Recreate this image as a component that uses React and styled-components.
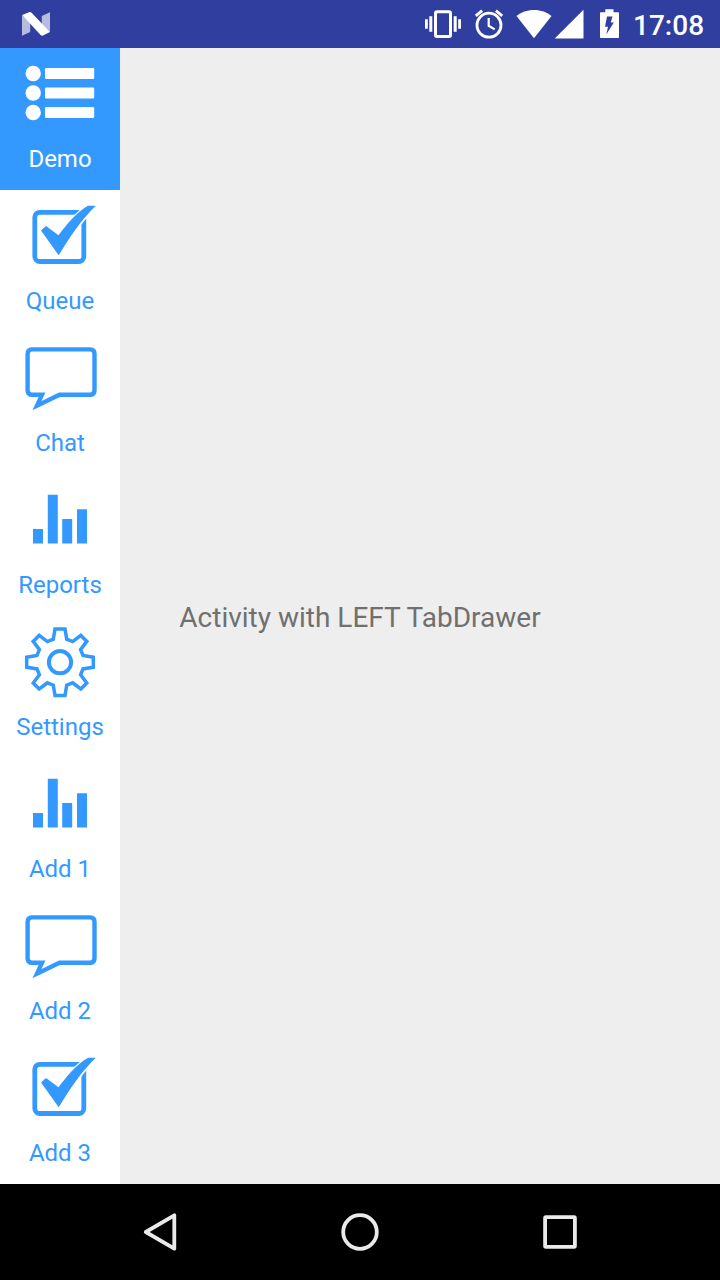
import React from 'react';
import styled, { createGlobalStyle } from 'styled-components';

const GlobalStyle = createGlobalStyle`
  body {
    margin: 0;
    background: #eeeeee;
    font-family: Roboto, "Liberation Sans", sans-serif;
  }
  svg { display: block; }
`;

const Screen = styled.div`
  display: grid;
  grid-template-rows: 48px 1fr 96px;
  width: 720px;
  height: 1280px;
  overflow: hidden;
`;

const StatusBar = styled.header`
  display: flex;
  align-items: center;
  justify-content: space-between;
  padding-right: 16px;
  background: #303f9f;
  color: #fff;
`;

const StatusIcons = styled.div`
  display: flex;
  align-items: center;
`;

const Clock = styled.time`
  width: 71px;
  padding-top: 4px;
  font-size: 28px;
  font-weight: 500;
  line-height: 34px;
  white-space: nowrap;
`;

const Stage = styled.main`
  display: grid;
  grid-template-columns: 120px 1fr;
  background: #eeeeee;
`;

const Message = styled.p`
  grid-area: 1 / 1 / 2 / 3;
  place-self: center;
  margin: 0;
  padding-top: 2px;
  font-size: 28px;
  line-height: 33px;
  color: #707070;
`;

const Drawer = styled.nav`
  grid-area: 1 / 1 / 2 / 2;
  display: flex;
  flex-direction: column;
  background: #fff;
`;

const Tab = styled.a`
  display: flex;
  flex-direction: column;
  align-items: center;
  height: 142px;
  color: ${(p) => (p.$active ? '#fff' : '#3399ff')};
  background: ${(p) => (p.$active ? '#3399ff' : '#fff')};
`;

const TabLabel = styled.span`
  margin-top: 4px;
  font-size: 24px;
  line-height: 28px;
`;

const NavBar = styled.footer`
  display: grid;
  grid-template-columns: repeat(3, 200px);
  justify-content: center;
  background: #000;
`;

const NavButton = styled.button`
  display: grid;
  place-items: center;
  padding: 0;
  border: 0;
  background: none;
  color: #eaeaea;
`;

const TabIcon = ({ children }) => (
  <svg width="120" height="93" viewBox="0 0 120 93" fill="currentColor">{children}</svg>
);

const ListIcon = () => (
  <TabIcon>
    {[25.5, 45, 64.5].map((y) => (
      <g key={y}>
        <circle cx="33.2" cy={y} r="7.7" />
        <rect x="45" y={y - 5.5} width="49.2" height="11" rx="1.3" />
      </g>
    ))}
  </TabIcon>
);

const CheckIcon = () => (
  <TabIcon>
    <rect x="34.8" y="22.3" width="49" height="49.2" rx="5" fill="none" stroke="currentColor" strokeWidth="4.8" />
    <path
      d="M41 40.5L46 36L58.5 45.3C67 34 76 23 88 15.8H95.8C81 30 70 47 58.7 65.2Z"
      stroke="#fff" strokeWidth="3" paintOrder="stroke"
    />
  </TabIcon>
);

const ChatIcon = () => (
  <TabIcon>
    <path
      d="M32 17.4H90Q94.5 17.4 94.5 21.9V58.2Q94.5 62.8 90 62.8H59.5L37 73.7L42 62.8H32Q27.6 62.8 27.6 58.2V21.9Q27.6 17.4 32 17.4Z"
      fill="none" stroke="currentColor" strokeWidth="4.4" strokeMiterlimit="10"
    />
  </TabIcon>
);

const BarsIcon = () => (
  <TabIcon>
    <path d="M33 55h10v14.5H33zM47.8 20.7h10v48.8h-10zM62.2 45h10v24.5h-10zM77 35.2h10v34.3H77z" />
  </TabIcon>
);

const tooth = [[-5, -33.3], [5, -33.3], [6.7, -23], [12.6, -20.6], [20.8, -26.8], [26.8, -20.8], [20.6, -12.6], [23, -6.7]];
const gearPoints = [0, 1, 2, 3].flatMap((turn) =>
  tooth.map(([x, y]) => {
    let p = [x, y];
    for (let i = 0; i < turn; i += 1) p = [-p[1], p[0]];
    return p.join(',');
  })
).join(' ');

const GearIcon = () => (
  <TabIcon>
    <g transform="translate(60 46.2)" fill="none" stroke="currentColor">
      <polygon points={gearPoints} strokeWidth="3.5" />
      <circle r="11.1" strokeWidth="4" />
    </g>
  </TabIcon>
);

const tabs = [
  { label: 'Demo', Icon: ListIcon, active: true },
  { label: 'Queue', Icon: CheckIcon },
  { label: 'Chat', Icon: ChatIcon },
  { label: 'Reports', Icon: BarsIcon },
  { label: 'Settings', Icon: GearIcon },
  { label: 'Add 1', Icon: BarsIcon },
  { label: 'Add 2', Icon: ChatIcon },
  { label: 'Add 3', Icon: CheckIcon },
];

const NotificationIcon = () => (
  <svg width="72" height="48" viewBox="0 0 72 48" fill="#fff">
    <path d="M22 15L30.2 22V32L22 35.7ZM41.8 16L50 12.3V32L41.8 25Z" opacity=".65" />
    <path d="M22.2 15L29 12.2Q30.6 11.8 31.8 13L50 32L43 35.6Q41.8 36.1 40.6 35Z" />
  </svg>
);

const VibrateIcon = () => (
  <svg width="48" height="48" viewBox="420 0 48 48" fill="#fff">
    <rect x="435.5" y="11.7" width="15" height="24.8" rx="1.5" fill="none" stroke="#fff" strokeWidth="3" />
    <path d="M425 19.3h2.8v9.4H425zM429.3 16.3h3v15.4h-3zM453.7 16.3h3v15.4h-3zM458.2 19.3h2.8v9.4h-2.8z" />
  </svg>
);

const AlarmIcon = () => (
  <svg width="44" height="48" viewBox="468 0 44 48" fill="none" stroke="#fff">
    <circle cx="489" cy="25.2" r="12" strokeWidth="2.8" />
    <path d="M475.8 15.8L482.1 10.6M502.2 15.8L495.9 10.6" strokeWidth="2.8" />
    <path d="M488.7 18V25.8L494.7 29.4" strokeWidth="2.2" />
  </svg>
);

const WifiIcon = () => (
  <svg width="41" height="48" viewBox="512 0 41 48" fill="#fff">
    <path d="M534 38.2L516.5 16.1C521 12.2 527 10 534 10S547 12.2 551.5 16.1Z" />
  </svg>
);

const SignalIcon = () => (
  <svg width="39" height="48" viewBox="553 0 39 48" fill="#fff">
    <path d="M583.5 9.7V38.5H554.7Z" />
  </svg>
);

const BatteryIcon = () => (
  <svg width="41" height="48" viewBox="592 0 41 48" fill="#fff">
    <path d="M605.3 9.3H613.5V12.2H618.2Q619 12.2 619 13V37.2Q619 38 618.2 38H600.8Q600 38 600 37.2V13Q600 12.2 600.8 12.2H605.3Z" />
    <path d="M607 16.5H612.5L610.7 22.4H613.8L606.3 34.5L608 26.7H605Z" fill="#303f9f" />
  </svg>
);

const NavIcon = ({ children }) => (
  <svg width="48" height="48" viewBox="0 0 48 48" fill="none" stroke="currentColor" strokeWidth="3.8" strokeLinejoin="round">
    {children}
  </svg>
);

export default function App() {
  return (
    <>
      <GlobalStyle />
      <Screen>
        <StatusBar>
          <NotificationIcon />
          <StatusIcons>
            <VibrateIcon />
            <AlarmIcon />
            <WifiIcon />
            <SignalIcon />
            <BatteryIcon />
            <Clock>17:08</Clock>
          </StatusIcons>
        </StatusBar>
        <Stage>
          <Message>Activity with LEFT TabDrawer</Message>
          <Drawer>
            {tabs.map(({ label, Icon, active }) => (
              <Tab key={label} $active={active}>
                <Icon />
                <TabLabel>{label}</TabLabel>
              </Tab>
            ))}
          </Drawer>
        </Stage>
        <NavBar>
          <NavButton aria-label="Back">
            <NavIcon><path d="M9.8 24L38.3 7.3V40.7Z" /></NavIcon>
          </NavButton>
          <NavButton aria-label="Home">
            <NavIcon><circle cx="24" cy="24" r="16.8" /></NavIcon>
          </NavButton>
          <NavButton aria-label="Recent apps">
            <NavIcon><rect x="9.1" y="9.1" width="29.8" height="29.8" rx="0.8" /></NavIcon>
          </NavButton>
        </NavBar>
      </Screen>
    </>
  );
}
